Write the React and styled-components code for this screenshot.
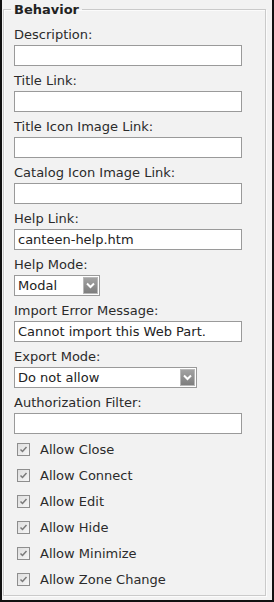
import React from 'react'
import styled, { createGlobalStyle } from 'styled-components'

const GlobalStyle = createGlobalStyle`
  html, body {
    margin: 0;
    padding: 0;
    background: #f2f2f2;
  }
  * {
    box-sizing: border-box;
  }
`

const Frame = styled.div`
  width: 274px;
  height: 602px;
  background: #f2f2f2;
  border: 2px solid #111;
  border-top: 0;
  padding: 2px 6px 0 1px;
  font-family: "DejaVu Sans", Verdana, sans-serif;
  font-size: 13px;
  color: #2b2b2b;
`

const Group = styled.fieldset`
  margin: 0;
  height: 594px;
  border: 1px solid #cacaca;
  box-shadow: inset 1px 1px 0 #fbfbfb, 1px 1px 0 #fbfbfb;
  padding: 10px 10px 0 10px;
  display: flex;
  flex-direction: column;
`

const Legend = styled.legend`
  margin-left: -3px;
  padding: 0 3px;
  font-weight: bold;
  line-height: 15px;
  color: #222;
`

const Field = styled.div`
  display: flex;
  flex-direction: column;
  gap: 2px;
  margin-bottom: 7px;
`

const Label = styled.label`
  line-height: 16px;
  white-space: nowrap;
`

const TextBox = styled.input`
  width: 228px;
  height: 21px;
  margin: 0;
  border: 1px solid #9a9a9a;
  background: #fff;
  padding: 0 3px;
  font: inherit;
  color: #222;
  outline: none;
`

const Select = styled.div`
  width: ${p => p.$width}px;
  height: 21px;
  border: 1px solid #9a9a9a;
  background: #fff;
  display: flex;
  align-items: center;
  justify-content: space-between;
  padding: 1px 1px 1px 3px;
  color: #222;
`

const Arrow = styled.span`
  width: 15px;
  height: 17px;
  border: 1px solid #b8b8b8;
  background: linear-gradient(#a2a2a2, #7e7e7e);
  display: flex;
  align-items: center;
  justify-content: center;
`

const Checks = styled.div`
  display: flex;
  flex-direction: column;
  gap: 13px;
  margin-top: 2px;
  padding-left: 3px;
`

const CheckRow = styled.label`
  display: flex;
  align-items: center;
  gap: 10px;
  line-height: 13px;
  height: 13px;
`

const Box = styled.span`
  width: 13px;
  height: 13px;
  border: 1px solid #8e8e8e;
  background: linear-gradient(135deg, #dedede, #f6f6f6);
  display: flex;
  align-items: center;
  justify-content: center;
`

const fields = [
  { label: 'Description:' },
  { label: 'Title Link:' },
  { label: 'Title Icon Image Link:' },
  { label: 'Catalog Icon Image Link:' },
  { label: 'Help Link:', value: 'canteen-help.htm' },
  { label: 'Help Mode:', select: 'Modal', width: 86 },
  { label: 'Import Error Message:', value: 'Cannot import this Web Part.' },
  { label: 'Export Mode:', select: 'Do not allow', width: 183 },
  { label: 'Authorization Filter:' },
]

const checks = ['Allow Close', 'Allow Connect', 'Allow Edit', 'Allow Hide', 'Allow Minimize', 'Allow Zone Change']

const Chevron = () => (
  <svg width="9" height="7" viewBox="0 0 9 7">
    <path d="M1 1.5 L4.5 5 L8 1.5" fill="none" stroke="#fff" strokeWidth="2" />
  </svg>
)

const Tick = () => (
  <svg width="9" height="9" viewBox="0 0 9 9">
    <path d="M1.5 4.5 L3.5 6.5 L7.5 2" fill="none" stroke="#7a7a7a" strokeWidth="1.5" />
  </svg>
)

const App = () => (
  <Frame>
    <GlobalStyle />
    <Group>
      <Legend>Behavior</Legend>
      {fields.map(f => (
        <Field key={f.label}>
          <Label>{f.label}</Label>
          {f.select ? (
            <Select $width={f.width}>
              <span>{f.select}</span>
              <Arrow><Chevron /></Arrow>
            </Select>
          ) : (
            <TextBox type="text" defaultValue={f.value || ''} />
          )}
        </Field>
      ))}
      <Checks>
        {checks.map(c => (
          <CheckRow key={c}>
            <Box><Tick /></Box>
            {c}
          </CheckRow>
        ))}
      </Checks>
    </Group>
  </Frame>
)

export default App
